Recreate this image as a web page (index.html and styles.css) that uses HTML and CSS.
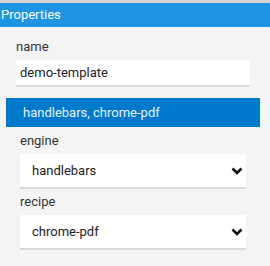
FILE: index.html
```html
<!DOCTYPE html>
<html lang="en">
<head>
    <meta charset="UTF-8">
    <title>Properties</title>
    <link rel="stylesheet" href="styles.css">
</head>
<body>
    <div class="panel">
        <div class="panel-title">Properties</div>
        <div class="panel-body">
            <div class="field name-field">
                <label>name</label>
                <div class="text-input">demo-template</div>
            </div>

            <div class="section-head">handlebars, chrome-pdf</div>

            <div class="section-body">
                <div class="field">
                    <label>engine</label>
                    <div class="select">
                        <span>handlebars</span>
                        <svg width="12" height="8" viewBox="0 0 12 8"><polyline points="1.5,1.5 6,6 10.5,1.5" fill="none" stroke="#111" stroke-width="2.6"/></svg>
                    </div>
                </div>
                <div class="field">
                    <label>recipe</label>
                    <div class="select">
                        <span>chrome-pdf</span>
                        <svg width="12" height="8" viewBox="0 0 12 8"><polyline points="1.5,1.5 6,6 10.5,1.5" fill="none" stroke="#111" stroke-width="2.6"/></svg>
                    </div>
                </div>
            </div>
        </div>
    </div>
</body>
</html>
```

FILE: styles.css
```css
* {
    box-sizing: border-box;
    margin: 0;
    padding: 0;
}

body {
    font-family: Roboto, 'Liberation Sans', sans-serif;
    background-color: #f4f4f4;
    color: #333;
    width: 270px;
    height: 266px;
    overflow: hidden;
}

.panel {
    border-top: 3px solid #d4d4d4;
}

.panel-title {
    height: 24px;
    line-height: 24px;
    background-color: #1e95e3;
    color: #fff;
    font-size: 13px;
    padding-left: 1px;
}

.panel-body {
    padding: 12px 10px 0 6px;
}

.field {
    display: flex;
    flex-direction: column;
}

.field label {
    font-size: 13px;
    line-height: 16px;
    color: #333;
    margin-bottom: 5px;
}

.name-field {
    padding: 0 0 0 10px;
    width: 244px;
    margin-bottom: 11px;
}

.text-input {
    height: 27px;
    background-color: #fff;
    border-bottom: 2px solid #dadada;
    font-size: 13px;
    line-height: 25px;
    padding-left: 4px;
    color: #222;
}

.section-head {
    width: 254px;
    height: 29px;
    line-height: 29px;
    background-color: #007acc;
    color: #e8f2fa;
    font-size: 13px;
    padding-left: 17px;
}

.section-body {
    padding: 6px 0 0 14px;
    width: 240px;
    display: flex;
    flex-direction: column;
    gap: 5px;
}

.select {
    height: 35px;
    background-color: #fff;
    border-bottom: 2px solid #dadada;
    display: flex;
    align-items: center;
    justify-content: space-between;
    padding: 0 3px 0 12px;
    font-size: 13px;
    color: #222;
}
```
